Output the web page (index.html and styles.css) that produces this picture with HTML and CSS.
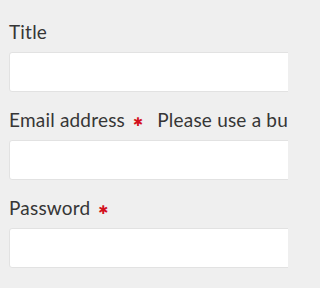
FILE: index.html
```html
<!DOCTYPE html>
<html>
<head>
<meta charset="utf-8">
<link rel="stylesheet" href="styles.css">
</head>
<body>
<form class="form">
  <div class="field">
    <label class="label">Title</label>
    <input class="input" type="text">
  </div>
  <div class="field">
    <label class="label"><span>Email address</span><span class="req">✱</span><span class="hint">Please use a business email address</span></label>
    <input class="input" type="email">
  </div>
  <div class="field">
    <label class="label"><span>Password</span><span class="req">✱</span></label>
    <input class="input" type="password">
  </div>
</form>
</body>
</html>
```
FILE: styles.css
```css
html, body {
  margin: 0;
  padding: 0;
  background: #efefef;
  width: 288px;
  height: 288px;
  overflow: hidden;
}
.form {
  width: 288px;
  box-sizing: border-box;
  padding: 20px 0 0 9px;
  display: flex;
  flex-direction: column;
  gap: 16px;
  font-family: Lato, "Open Sans", sans-serif;
  overflow: hidden;
}
.field {
  display: flex;
  flex-direction: column;
  gap: 8px;
}
.label {
  display: flex;
  align-items: center;
  font-size: 19px;
  letter-spacing: 0.2px;
  line-height: 24px;
  height: 24px;
  color: #363636;
  white-space: nowrap;
}
.req {
  color: #d3101c;
  font-family: "DejaVu Sans", sans-serif;
  font-size: 12px;
  line-height: 12px;
  margin-left: 8px;
  margin-top: 3px;
}
.hint {
  margin-left: 14px;
}
.input {
  box-sizing: border-box;
  width: 300px;
  height: 40px;
  margin: 0;
  flex-shrink: 0;
  background: #fff;
  border: 1px solid #e2e2e2;
  border-radius: 3px;
  outline: none;
}
```
